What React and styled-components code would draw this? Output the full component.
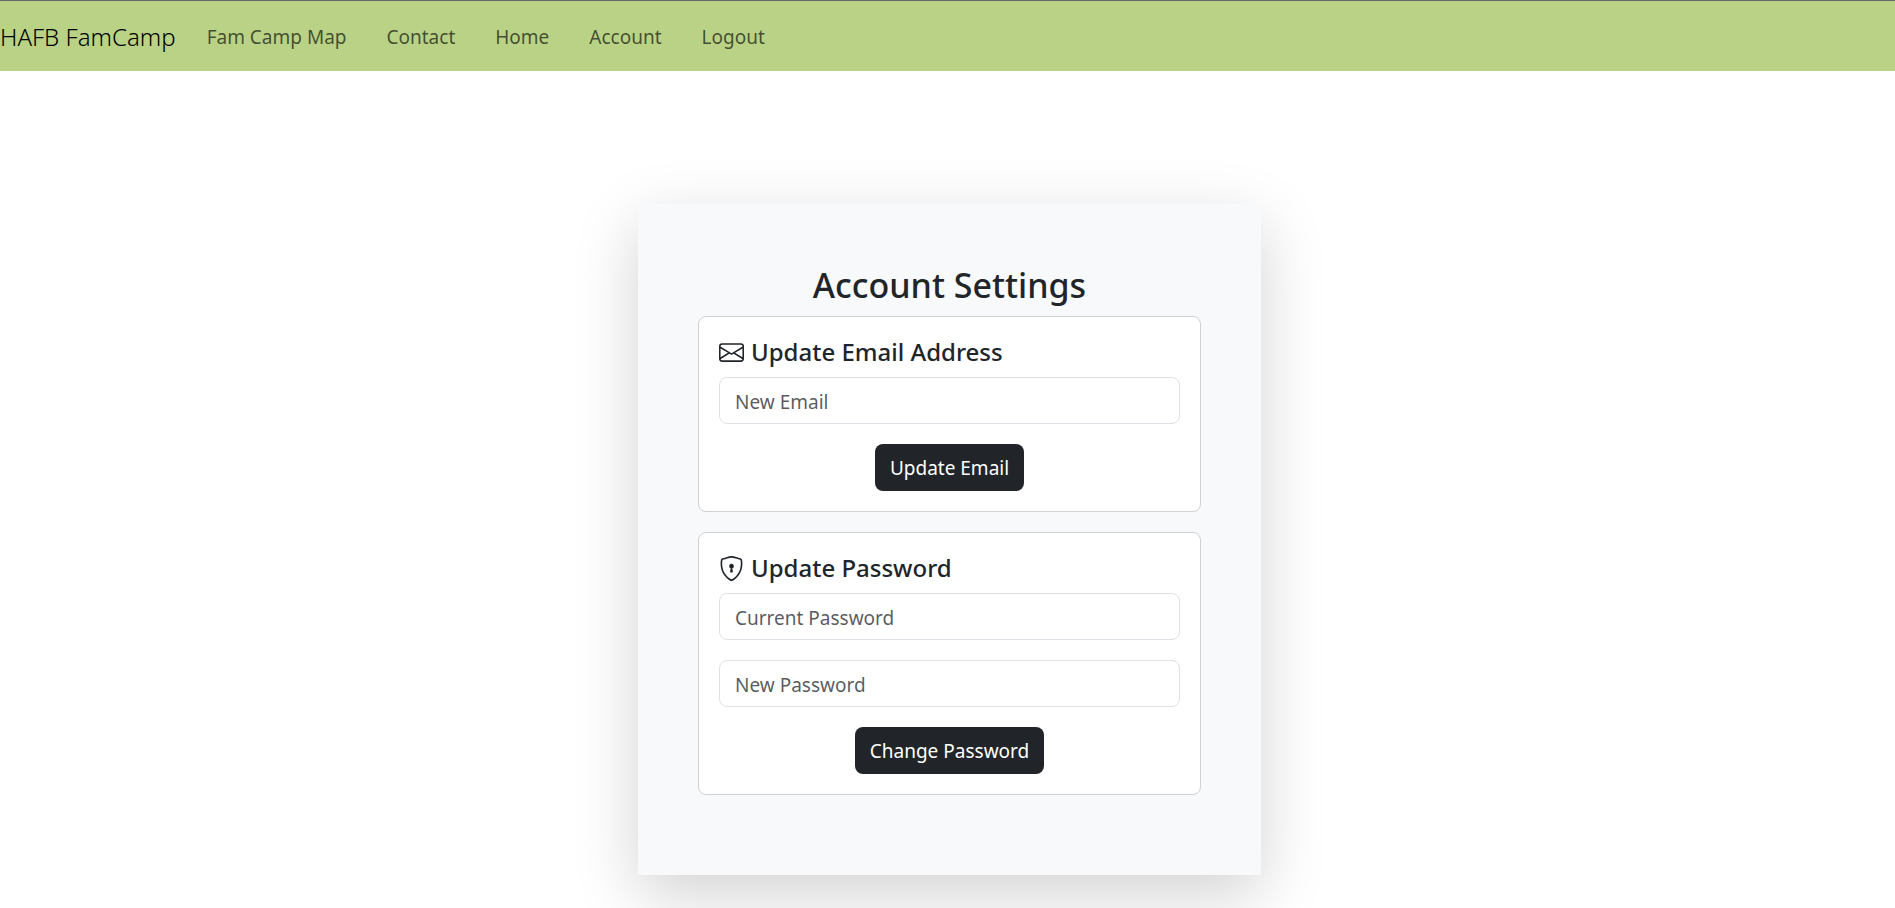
import React from "react";
import styled, { createGlobalStyle } from "styled-components";
import { BsEnvelope, BsShieldLock } from "react-icons/bs";

const GlobalStyle = createGlobalStyle`
  *, *::before, *::after { box-sizing: border-box; }
  body {
    margin: 0;
    background: #fff;
    color: #212529;
    font: 400 19px/30px "Noto Sans", "Liberation Sans", sans-serif;
  }
`;

const Navbar = styled.nav`
  display: flex;
  align-items: center;
  min-height: 71px;
  padding-top: 2px;
  border-top: 1px solid #6a6669;
  background: #b9d285;
`;

const Brand = styled.a`
  margin-right: 21px;
  color: #000;
  font-size: 24px;
  font-weight: 350;
  line-height: 38px;
  text-decoration: none;
`;

const NavList = styled.ul`
  display: flex;
  gap: 20px;
  margin: 0;
  padding: 0;
  list-style: none;
`;

const NavLink = styled.a`
  display: block;
  padding: 10px;
  color: rgba(0, 0, 0, 0.65);
  text-decoration: none;
`;

const Main = styled.main`
  display: flex;
  justify-content: center;
  min-height: calc(100vh - 71px);
  padding: 133px 0 33px 4px;
`;

const Panel = styled.section`
  align-self: flex-start;
  width: 100%;
  max-width: 623px;
  padding: 60px 60px 80px;
  background: #f8f9fb;
  box-shadow: 0 20px 60px rgba(0, 0, 0, 0.175);
`;

const Title = styled.h1`
  margin: 0 0 10px;
  font-size: 34px;
  font-weight: 500;
  line-height: 42px;
  text-align: center;
`;

const Card = styled.form`
  display: flex;
  flex-direction: column;
  padding: 20px;
  border: 1px solid #d0d1d3;
  border-radius: 8px;
  background: #fff;

  & + & { margin-top: 20px; }
`;

const CardTitle = styled.h2`
  display: flex;
  align-items: center;
  gap: 7px;
  margin: 0 0 10px;
  font-size: 24px;
  font-weight: 500;
  line-height: 30px;

  svg { width: 25px; height: 25px; }
`;

const Field = styled.input`
  width: 100%;
  height: 47px;
  margin-bottom: 20px;
  padding: 9px 15px 7px;
  border: 1px solid #dee2e6;
  border-radius: 8px;
  background: #fff;
  color: #212529;
  font: inherit;

  &::placeholder { color: rgba(33, 37, 41, 0.75); opacity: 1; }
`;

const Button = styled.button`
  align-self: center;
  height: 47px;
  padding: 0 15px;
  border: 0;
  border-radius: 8px;
  background: #212529;
  color: #fff;
  font: inherit;
  cursor: pointer;
`;

const links = ["Fam Camp Map", "Contact", "Home", "Account", "Logout"];

export default function App() {
  const stay = (event) => event.preventDefault();
  return (
    <>
      <GlobalStyle />
      <Navbar>
        <Brand href="#">HAFB FamCamp</Brand>
        <NavList>
          {links.map((label) => (
            <li key={label}><NavLink href="#">{label}</NavLink></li>
          ))}
        </NavList>
      </Navbar>
      <Main>
        <Panel>
          <Title>Account Settings</Title>
          <Card onSubmit={stay}>
            <CardTitle><BsEnvelope aria-hidden="true" />Update Email Address</CardTitle>
            <Field type="email" placeholder="New Email" aria-label="New Email" />
            <Button type="submit">Update Email</Button>
          </Card>
          <Card onSubmit={stay}>
            <CardTitle><BsShieldLock aria-hidden="true" />Update Password</CardTitle>
            <Field type="password" placeholder="Current Password" aria-label="Current Password" />
            <Field type="password" placeholder="New Password" aria-label="New Password" />
            <Button type="submit">Change Password</Button>
          </Card>
        </Panel>
      </Main>
    </>
  );
}
